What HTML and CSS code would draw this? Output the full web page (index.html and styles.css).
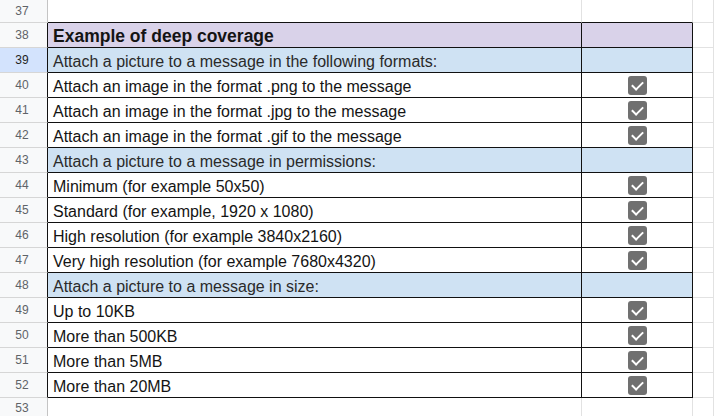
FILE: index.html
```html
<!DOCTYPE html>
<html>
<head>
<meta charset="utf-8">
<link rel="stylesheet" href="styles.css">
</head>
<body>
<div class="sheet">
  <div class="row first edge-top">
    <div class="num">37</div><div class="cell a"></div><div class="cell b"></div><div class="cell c"></div>
  </div>
  <div class="row t head">
    <div class="num">38</div><div class="cell a">Example of deep coverage</div><div class="cell b"></div><div class="cell c"></div>
  </div>
  <div class="row t sec">
    <div class="num active">39</div><div class="cell a">Attach a picture to a message in the following formats:</div><div class="cell b"></div><div class="cell c"></div>
  </div>
  <div class="row t">
    <div class="num">40</div><div class="cell a">Attach an image in the format .png to the message</div><div class="cell b"><span class="cb"></span></div><div class="cell c"></div>
  </div>
  <div class="row t">
    <div class="num">41</div><div class="cell a">Attach an image in the format .jpg to the message</div><div class="cell b"><span class="cb"></span></div><div class="cell c"></div>
  </div>
  <div class="row t">
    <div class="num">42</div><div class="cell a">Attach an image in the format .gif to the message</div><div class="cell b"><span class="cb"></span></div><div class="cell c"></div>
  </div>
  <div class="row t sec">
    <div class="num">43</div><div class="cell a">Attach a picture to a message in permissions:</div><div class="cell b"></div><div class="cell c"></div>
  </div>
  <div class="row t">
    <div class="num">44</div><div class="cell a">Minimum (for example 50x50)</div><div class="cell b"><span class="cb"></span></div><div class="cell c"></div>
  </div>
  <div class="row t">
    <div class="num">45</div><div class="cell a">Standard (for example, 1920 x 1080)</div><div class="cell b"><span class="cb"></span></div><div class="cell c"></div>
  </div>
  <div class="row t">
    <div class="num">46</div><div class="cell a">High resolution (for example 3840x2160)</div><div class="cell b"><span class="cb"></span></div><div class="cell c"></div>
  </div>
  <div class="row t">
    <div class="num">47</div><div class="cell a">Very high resolution (for example 7680x4320)</div><div class="cell b"><span class="cb"></span></div><div class="cell c"></div>
  </div>
  <div class="row t sec">
    <div class="num">48</div><div class="cell a">Attach a picture to a message in size:</div><div class="cell b"></div><div class="cell c"></div>
  </div>
  <div class="row t">
    <div class="num">49</div><div class="cell a">Up to 10KB</div><div class="cell b"><span class="cb"></span></div><div class="cell c"></div>
  </div>
  <div class="row t">
    <div class="num">50</div><div class="cell a">More than 500KB</div><div class="cell b"><span class="cb"></span></div><div class="cell c"></div>
  </div>
  <div class="row t">
    <div class="num">51</div><div class="cell a">More than 5MB</div><div class="cell b"><span class="cb"></span></div><div class="cell c"></div>
  </div>
  <div class="row t">
    <div class="num">52</div><div class="cell a">More than 20MB</div><div class="cell b"><span class="cb"></span></div><div class="cell c"></div>
  </div>
  <div class="row last">
    <div class="num">53</div><div class="cell a"></div><div class="cell b"></div><div class="cell c"></div>
  </div>
</div>
</body>
</html>
```
FILE: styles.css
```css
html, body {
  margin: 0;
  padding: 0;
  background: #ffffff;
}
body {
  font-family: "Liberation Sans", Arial, sans-serif;
  width: 714px;
  height: 416px;
  overflow: hidden;
}
.sheet {
  display: flex;
  flex-direction: column;
}
.row {
  display: grid;
  grid-template-columns: 48px 534px 111px 1fr;
  height: 25px;
}
.row.first { height: 23px; }
.row.last { height: 20px; }
.num {
  background: #f8f9fa;
  color: #5f6368;
  font-size: 12px;
  display: flex;
  align-items: center;
  justify-content: center;
  border-bottom: 1px solid #d6d6d6;
  border-right: 1px solid #c4c4c4;
  box-sizing: border-box;
  padding-right: 3px;
}
.num.active {
  background: #d3e3fd;
  color: #1f1f1f;
}
.cell {
  box-sizing: border-box;
  border-right: 1px solid #e2e2e2;
  border-bottom: 1px solid #e2e2e2;
  display: flex;
  align-items: center;
  font-size: 16px;
  color: #141414;
  white-space: nowrap;
}
.cell.a { padding-left: 5px; padding-top: 3px; }
.cell.b { justify-content: center; padding-left: 1px; }
.row.edge-top .cell.a,
.row.edge-top .cell.b { border-bottom-color: #111; }
.row.t .num { border-right-color: #111; }
.row.t .cell.a,
.row.t .cell.b { border-bottom-color: #111; border-right-color: #111; }
.row.head .cell.a,
.row.head .cell.b { background: #d9d2e9; }
.row.head .cell.a { font-weight: bold; font-size: 17.5px; }
.row.sec .cell.a,
.row.sec .cell.b { background: #cfe2f3; }
.row.sec .cell.a { color: #2a2a2a; }
.cb {
  width: 19px;
  height: 19px;
  border-radius: 3px;
  background: #707070;
  position: relative;
  display: block;
}
.cb::after {
  content: "";
  position: absolute;
  left: 4px;
  top: 3px;
  width: 9px;
  height: 5px;
  border-left: 2.5px solid #fff;
  border-bottom: 2.5px solid #fff;
  transform: translate(0px, 2px) rotate(-45deg);
}
```
